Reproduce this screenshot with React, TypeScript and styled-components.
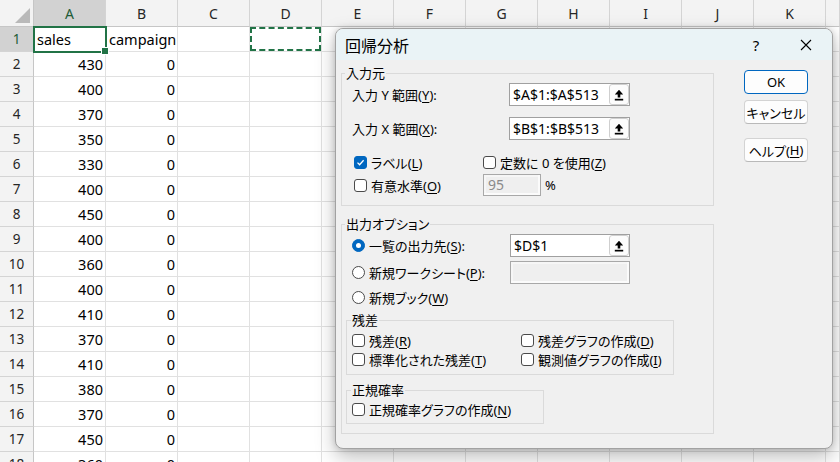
import React from "react";
import styled, { createGlobalStyle, css } from "styled-components";

const GlobalStyle = createGlobalStyle`
  html, body { margin: 0; padding: 0; background: #fff; overflow: hidden; }
  * { box-sizing: border-box; }
`;

const Screen = styled.div`
  position: relative;
  width: 840px;
  height: 462px;
  overflow: hidden;
  background: #fff;
`;

/* ---------- spreadsheet ---------- */
const Sheet = styled.div`
  display: grid;
  grid-template-columns: 34px repeat(11, 72px) 14px;
  grid-template-rows: 27px repeat(18, 25px);
  font-family: "Noto Sans", "Noto Sans CJK JP", sans-serif;
`;

const Corner = styled.div`
  position: relative;
  background: #f3f3f3;
  border-right: 1px solid #c6c6c6;
  border-bottom: 1px solid #c6c6c6;
  display: flex;
  align-items: flex-end;
  justify-content: flex-end;
  padding: 0 3px 3px 0;
`;

const ColHeader = styled.div<{ $selected?: boolean }>`
  background: ${(p) => (p.$selected ? "#d2d2d2" : "#f3f3f3")};
  border-right: 1px solid #d4d4d4;
  border-bottom: 1px solid ${(p) => (p.$selected ? "#9c9c9c" : "#c6c6c6")};
  color: ${(p) => (p.$selected ? "#1d5c37" : "#262626")};
  font-size: 14px;
  display: flex;
  align-items: center;
  justify-content: center;
`;

const RowHeader = styled.div<{ $selected?: boolean }>`
  background: ${(p) => (p.$selected ? "#d2d2d2" : "#f3f3f3")};
  border-right: 1px solid ${(p) => (p.$selected ? "#9c9c9c" : "#c6c6c6")};
  border-bottom: 1px solid #d4d4d4;
  color: ${(p) => (p.$selected ? "#1d5c37" : "#262626")};
  font-size: 13.5px;
  display: flex;
  align-items: center;
  justify-content: center;
`;

const Cell = styled.div<{ $right?: boolean; $active?: boolean; $marquee?: boolean }>`
  position: relative;
  border-right: 1px solid #e1e1e1;
  border-bottom: 1px solid #e1e1e1;
  padding: 0 ${(p) => (p.$right ? "2px" : "3px")};
  font-size: 14.5px;
  line-height: 24px;
  color: #000;
  text-align: ${(p) => (p.$right ? "right" : "left")};
  white-space: nowrap;
  ${(p) =>
    p.$active &&
    css`
      outline: 2px solid #217346;
      outline-offset: -1px;
      z-index: 1;
      &::after {
        content: "";
        position: absolute;
        right: -4px;
        bottom: -4px;
        width: 6px;
        height: 6px;
        background: #217346;
        border: 1px solid #fff;
      }
    `}
  ${(p) =>
    p.$marquee &&
    css`
      &::before {
        content: "";
        position: absolute;
        left: 0;
        top: 0;
        right: 0;
        bottom: 0;
        border: 2px dashed #217346;
      }
    `}
`;

/* ---------- dialog ---------- */
const Dialog = styled.div`
  position: absolute;
  left: 335px;
  top: 28px;
  width: 498px;
  height: 421px;
  display: flex;
  flex-direction: column;
  background: #f0f0f0;
  border: 1px solid #a2a2a2;
  border-radius: 8px;
  overflow: hidden;
  box-shadow: 0 8px 20px rgba(0, 0, 0, 0.26), 0 0 6px rgba(0, 0, 0, 0.16);
  font-family: "Noto Sans", "Noto Sans CJK JP", sans-serif;
  font-size: 13px;
  color: #000;
  font-feature-settings: "palt";
`;

const TitleBar = styled.div`
  height: 31px;
  flex: none;
  display: flex;
  align-items: center;
  background: #eaf3f6;
  padding: 0 1px 0 9px;
`;

const Title = styled.div`
  flex: 1;
  font-size: 16px;
  font-family: "Noto Sans CJK JP", sans-serif;
`;

const TitleButton = styled.div`
  width: 50px;
  height: 31px;
  display: flex;
  align-items: center;
  justify-content: center;
  font-size: 15px;
`;

const Body = styled.div`
  flex: 1;
  display: flex;
  padding: 5px 0 0 5px;
`;

const Main = styled.div`
  width: 373px;
  display: flex;
  flex-direction: column;
  gap: 10px;
`;

const Side = styled.div`
  margin-left: 30px;
  padding-top: 5px;
  display: flex;
  flex-direction: column;
`;

const Group = styled.fieldset<{ $w: number; $h: number; $mt?: number }>`
  margin: ${(p) => p.$mt ?? 0}px 0 0 0;
  padding: 0;
  min-width: 0;
  border: 1px solid #dadada;
  width: ${(p) => p.$w}px;
  height: ${(p) => p.$h}px;
  flex: none;
`;

const Legend = styled.legend<{ $ml: number }>`
  margin-left: ${(p) => p.$ml}px;
  padding: 0 1px;
  font-size: 13px;
  line-height: 16px;
  height: 16px;
`;

const Inner = styled.div<{ $pt: number; $pl: number }>`
  display: flex;
  flex-direction: column;
  padding: ${(p) => p.$pt}px 0 0 ${(p) => p.$pl}px;
`;

const Row = styled.div<{ $h: number; $mt: number; $pl?: number }>`
  display: flex;
  align-items: center;
  height: ${(p) => p.$h}px;
  margin-top: ${(p) => p.$mt}px;
  padding-left: ${(p) => p.$pl ?? 0}px;
  white-space: nowrap;
`;

const Item = styled.div<{ $w?: number; $indent?: number }>`
  display: flex;
  align-items: center;
  width: ${(p) => (p.$w ? `${p.$w}px` : "auto")};
  padding-left: ${(p) => p.$indent ?? 0}px;
  flex: none;
`;

const Key = styled.span`
  text-decoration: underline;
  text-underline-offset: 2px;
`;

const Box = styled.span<{ $checked?: boolean }>`
  width: 13px;
  height: 13px;
  flex: none;
  border-radius: 3px;
  border: 1px solid ${(p) => (p.$checked ? "#0067c0" : "#4a4a4a")};
  background: ${(p) => (p.$checked ? "#0067c0" : "#fff")};
  display: flex;
  align-items: center;
  justify-content: center;
  margin-right: 4px;
`;

const Radio = styled.span<{ $on?: boolean }>`
  width: 13px;
  height: 13px;
  flex: none;
  border-radius: 50%;
  border: 1px solid ${(p) => (p.$on ? "#0067c0" : "#4a4a4a")};
  background: ${(p) => (p.$on ? "#0067c0" : "#fff")};
  display: flex;
  align-items: center;
  justify-content: center;
  margin-right: 4px;
  &::after {
    content: "";
    width: 5px;
    height: 5px;
    border-radius: 50%;
    background: #fff;
    display: ${(p) => (p.$on ? "block" : "none")};
  }
`;

const RefInput = styled.div<{ $w: number }>`
  width: ${(p) => p.$w}px;
  height: 23px;
  flex: none;
  display: flex;
  align-items: center;
  border: 1px solid #a0a0a0;
  background: #fff;
`;

const RefText = styled.span`
  flex: 1;
  padding-left: 3px;
  font-size: 14px;
  line-height: 21px;
`;

const PickButton = styled.div`
  width: 20px;
  height: 21px;
  flex: none;
  border: 1px solid #cfcfcf;
  border-radius: 3px;
  background: #fcfcfc;
  display: flex;
  align-items: center;
  justify-content: center;
`;

const DisabledBox = styled.div<{ $w: number; $h: number }>`
  width: ${(p) => p.$w}px;
  height: ${(p) => p.$h}px;
  flex: none;
  border: 1px solid #a8a8a8;
  background: #efefef;
  box-shadow: inset -2px -2px 0 #fbfbfb, inset 2px 2px 0 #f6f6f6;
  color: #8a8a8a;
  font-size: 14px;
  line-height: 20px;
  padding-left: 4px;
`;

const Percent = styled.span`
  margin-left: 4px;
  font-size: 13px;
`;

const Btn = styled.div<{ $primary?: boolean; $mt: number }>`
  width: 64px;
  height: 24px;
  margin-top: ${(p) => p.$mt}px;
  border-radius: 4px;
  background: #fdfdfd;
  border: 1px solid ${(p) => (p.$primary ? "#0067c0" : "#d3d3d3")};
  border-bottom-color: ${(p) => (p.$primary ? "#0067c0" : "#b9b9b9")};
  display: flex;
  align-items: center;
  justify-content: center;
  font-size: 13px;
`;

const UpIcon = () => (
  <svg width="10" height="12" viewBox="0 0 10 12">
    <path d="M5 0.8 L9.2 5.4 H6.3 V8.6 H3.7 V5.4 H0.8 Z" fill="#000" />
    <rect x="0.8" y="9.8" width="8.4" height="1.7" fill="#000" />
  </svg>
);

const CheckMark = () => (
  <svg width="9" height="9" viewBox="0 0 9 9">
    <polyline points="1.5,4.6 3.6,6.7 7.6,2.2" fill="none" stroke="#fff" strokeWidth="1.3" />
  </svg>
);

const Check = ({ checked, children }: { checked?: boolean; children: React.ReactNode }) => (
  <>
    <Box $checked={checked}>{checked && <CheckMark />}</Box>
    <span>{children}</span>
  </>
);

const colA = [430, 400, 370, 350, 330, 400, 450, 400, 360, 400, 410, 370, 410, 380, 370, 450, 360];
const letters = ["A", "B", "C", "D", "E", "F", "G", "H", "I", "J", "K"];

export default function App() {
  const rows: React.ReactNode[] = [];
  for (let r = 1; r <= 18; r++) {
    rows.push(
      <RowHeader key={`h${r}`} $selected={r === 1}>
        {r}
      </RowHeader>
    );
    letters.forEach((l, i) => {
      let content: React.ReactNode = null;
      let right = false;
      if (r === 1 && i === 0) content = "sales";
      else if (r === 1 && i === 1) content = "campaign";
      else if (r > 1 && i === 0) {
        content = colA[r - 2];
        right = true;
      } else if (r > 1 && i === 1) {
        content = 0;
        right = true;
      }
      rows.push(
        <Cell key={`${l}${r}`} $right={right} $active={r === 1 && i === 0} $marquee={r === 1 && i === 3}>
          {content}
        </Cell>
      );
    });
    rows.push(<Cell key={`L${r}`} />);
  }

  return (
    <Screen>
      <GlobalStyle />
      <Sheet>
        <Corner>
          <svg width="15" height="15" viewBox="0 0 15 15">
            <polygon points="15,0 15,15 0,15" fill="#b9b9b9" />
          </svg>
        </Corner>
        {letters.map((l, i) => (
          <ColHeader key={l} $selected={i === 0}>
            {l}
          </ColHeader>
        ))}
        <ColHeader />
        {rows}
      </Sheet>

      <Dialog>
        <TitleBar>
          <Title>回帰分析</Title>
          <TitleButton>?</TitleButton>
          <TitleButton>
            <svg width="12" height="12" viewBox="0 0 12 12">
              <path d="M1 1 L11 11 M11 1 L1 11" stroke="#000" strokeWidth="1.1" />
            </svg>
          </TitleButton>
        </TitleBar>
        <Body>
          <Main>
            <Group $w={373} $h={141}>
              <Legend $ml={3}>入力元</Legend>
              <Inner $pt={2} $pl={10}>
                <Row $h={23} $mt={0}>
                  <Item $w={157}>
                    入力 Y 範囲(<Key>Y</Key>):
                  </Item>
                  <RefInput $w={121}>
                    <RefText>$A$1:$A$513</RefText>
                    <PickButton>
                      <UpIcon />
                    </PickButton>
                  </RefInput>
                </Row>
                <Row $h={23} $mt={11}>
                  <Item $w={157}>
                    入力 X 範囲(<Key>X</Key>):
                  </Item>
                  <RefInput $w={121}>
                    <RefText>$B$1:$B$513</RefText>
                    <PickButton>
                      <UpIcon />
                    </PickButton>
                  </RefInput>
                </Row>
                <Row $h={20} $mt={12}>
                  <Item $w={131} $indent={2}>
                    <Check checked>
                      ラベル(<Key>L</Key>)
                    </Check>
                  </Item>
                  <Item>
                    <Check>
                      定数に 0 を使用(<Key>Z</Key>)
                    </Check>
                  </Item>
                </Row>
                <Row $h={22} $mt={2}>
                  <Item $w={131} $indent={2}>
                    <Check>
                      有意水準(<Key>O</Key>)
                    </Check>
                  </Item>
                  <DisabledBox $w={58} $h={22}>95</DisabledBox>
                  <Percent>%</Percent>
                </Row>
              </Inner>
            </Group>

            <Group $w={373} $h={218}>
              <Legend $ml={3}>出力オプション</Legend>
              <Inner $pt={0} $pl={4}>
                <Row $h={23} $mt={2} $pl={6}>
                  <Item $w={158}>
                    <Radio $on />
                    <span>
                      一覧の出力先(<Key>S</Key>):
                    </span>
                  </Item>
                  <RefInput $w={120}>
                    <RefText>$D$1</RefText>
                    <PickButton>
                      <UpIcon />
                    </PickButton>
                  </RefInput>
                </Row>
                <Row $h={23} $mt={4} $pl={6}>
                  <Item $w={158}>
                    <Radio />
                    <span>
                      新規ワークシート(<Key>P</Key>):
                    </span>
                  </Item>
                  <DisabledBox $w={120} $h={23} />
                </Row>
                <Row $h={20} $mt={3} $pl={6}>
                  <Item>
                    <Radio />
                    <span>
                      新規ブック(<Key>W</Key>)
                    </span>
                  </Item>
                </Row>

                <Group $w={328} $h={63} $mt={5}>
                  <Legend $ml={4}>残差</Legend>
                  <Inner $pt={3} $pl={5}>
                    <Row $h={18} $mt={0}>
                      <Item $w={169}>
                        <Check>
                          残差(<Key>R</Key>)
                        </Check>
                      </Item>
                      <Item>
                        <Check>
                          残差グラフの作成(<Key>D</Key>)
                        </Check>
                      </Item>
                    </Row>
                    <Row $h={18} $mt={1}>
                      <Item $w={169}>
                        <Check>
                          標準化された残差(<Key>T</Key>)
                        </Check>
                      </Item>
                      <Item>
                        <Check>
                          観測値グラフの作成(<Key>I</Key>)
                        </Check>
                      </Item>
                    </Row>
                  </Inner>
                </Group>

                <Group $w={198} $h={42} $mt={7}>
                  <Legend $ml={4}>正規確率</Legend>
                  <Inner $pt={2} $pl={5}>
                    <Row $h={18} $mt={0}>
                      <Item>
                        <Check>
                          正規確率グラフの作成(<Key>N</Key>)
                        </Check>
                      </Item>
                    </Row>
                  </Inner>
                </Group>
              </Inner>
            </Group>
          </Main>
          <Side>
            <Btn $primary $mt={0}>
              OK
            </Btn>
            <Btn $mt={6}>キャンセル</Btn>
            <Btn $mt={14}>
              ヘルプ(<Key>H</Key>)
            </Btn>
          </Side>
        </Body>
      </Dialog>
    </Screen>
  );
}
